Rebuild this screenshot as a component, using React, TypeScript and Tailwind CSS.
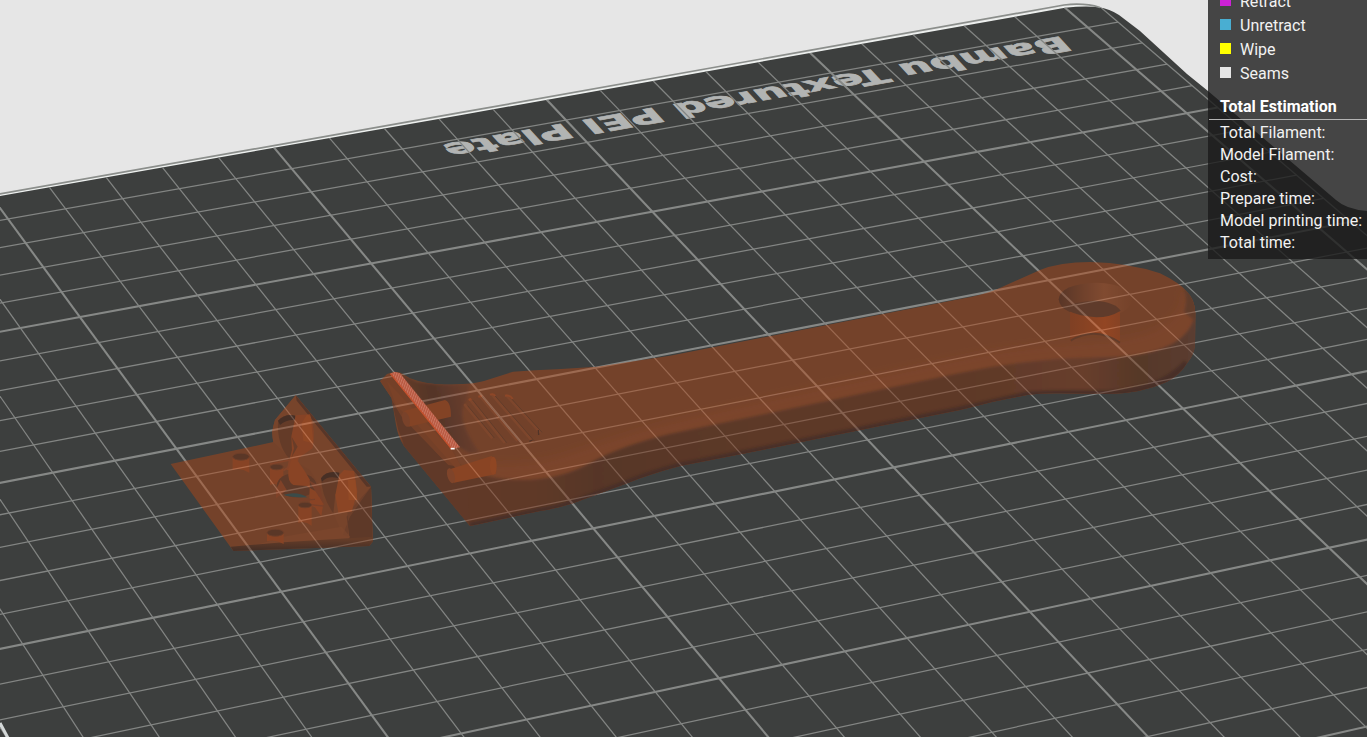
import React from "react";

type Point = [number, number];

// Projection of the build plate. One cell is 10 mm; the anchor quad spans 10 x 20 cells.
const anchors: Point[] = [
  [272.6, 145.9],
  [808.7, 51.6],
  [1329, 547.7],
  [719, 678.3],
];

function makeProjection([p0, p1, p2, p3]: Point[]) {
  const dx1 = p1[0] - p2[0];
  const dx2 = p3[0] - p2[0];
  const dx3 = p0[0] - p1[0] + p2[0] - p3[0];
  const dy1 = p1[1] - p2[1];
  const dy2 = p3[1] - p2[1];
  const dy3 = p0[1] - p1[1] + p2[1] - p3[1];
  const den = dx1 * dy2 - dx2 * dy1;
  const g = (dx3 * dy2 - dx2 * dy3) / den;
  const h = (dx1 * dy3 - dx3 * dy1) / den;
  return (u: number, v: number): Point => {
    const s = u / 10;
    const t = v / 20;
    const w = g * s + h * t + 1;
    return [
      ((p1[0] - p0[0] + g * p1[0]) * s + (p3[0] - p0[0] + h * p3[0]) * t + p0[0]) / w,
      ((p1[1] - p0[1] + g * p1[1]) * s + (p3[1] - p0[1] + h * p3[1]) * t + p0[1]) / w,
    ];
  };
}

const project = makeProjection(anchors);
const LEFT = -10;
const RIGHT = 15.6;
const BOTTOM = 25.6;

function GridLine({ from, to, bold }: { from: Point; to: Point; bold: boolean }) {
  const [x1, y1] = project(from[0], from[1]);
  const [x2, y2] = project(to[0], to[1]);
  return <line x1={x1} y1={y1} x2={x2} y2={y2} stroke={bold ? "#868886" : "#838583"} strokeWidth={bold ? 2.1 : 1.25} />;
}

const PLATE =
  "M-2 196.3 L460 115.2 L1065 7.8 Q1084 5.5 1098 7 Q1110 9 1119 15 L1140 31 L1187 74 L1208 91 L1336 200 Q1347 210 1369 211 V740 H-2 Z";

function Plate() {
  const columns = Array.from({ length: 26 }, (_, i) => LEFT + i);
  const rows = Array.from({ length: 25 }, (_, i) => i + 1);
  return (
    <g>
      <clipPath id="plate-clip">
        <path d={PLATE} />
      </clipPath>
      <path d="M-2 195.8 L460 114.7 L1065 7.2 Q1084 4.5 1096 6.5" fill="none" stroke="#eef1ef" strokeWidth="1.6" />
      <path d={PLATE} fill="#3d3f3e" />
      <text
        transform="matrix(-5.36 0.94 -2.2 -2.38 1062 36)"
        fontSize="7.95"
        fontWeight="700"
        fill="#b2b4b3"
        stroke="#b2b4b3"
        strokeWidth="0.25"
        className="font-['DejaVu_Sans',sans-serif]"
      >
        Bambu Textured PEI Plate
      </text>
      <g clipPath="url(#plate-clip)">
        {rows.map((v) => (
          <GridLine key={v} from={[LEFT, v]} to={[RIGHT, v]} bold={v % 5 === 0} />
        ))}
        {columns.map((u) => (
          <GridLine key={u} from={[u, 0]} to={[u, BOTTOM]} bold={u % 5 === 0} />
        ))}
        <GridLine from={[RIGHT, 0.2]} to={[RIGHT, BOTTOM]} bold={false} />
      </g>
      <path d="M0 723 L8 738" stroke="#d4d8d8" strokeWidth="3" />
      <path d="M-2 194.2 L460 112.7 L1064 5 Q1084 2.6 1100 7.500" fill="none" stroke="#8b8e8b" strokeWidth="1.7" />
    </g>
  );
}

function SmallHole({ x, y, rx, depth }: { x: number; y: number; rx: number; depth: number }) {
  return (
    <g>
      <path d={`M${x - rx} ${y} V${y + depth - 8} Q${x} ${y + depth - 16} ${x + rx} ${y + depth} V${y} Z`} fill="#e24a08" />
      <ellipse cx={x} cy={y} rx={rx} ry={rx * 0.42} fill="#7d2e0d" stroke="#a83d10" strokeWidth="3" />
    </g>
  );
}

function Bracket() {
  return (
    <g transform="translate(150 370) scale(0.33333)" opacity="0.45">
      <path d="M62 282 L370 216 L366 185 L375 150 L437 76 L663 350 L668 515 L658 528 L250 543 Z" fill="#b84713" />
      <path d="M437 76 L375 150 Q362 185 370 216 L425 268 L480 300 L530 380 L578 495 L668 500 L663 350 Z" fill="#be4b16" />
      <path d="M663 350 L668 515 L600 515 L590 440 Z" fill="#87320f" />
      <path d="M663 350 L600 440 L578 495 L595 500 L592 430 Z" fill="#a84113" />
      <path d="M437 76 L663 350 L650 350 L440 92 Z" fill="#7a2c0e" />
      <path d="M400 500 L575 470 L600 500 L590 512 L330 522 Z" fill="#c9511a" opacity="0.7" />
      <path d="M242 530 L400 517 L668 500 L668 515 L658 528 L250 543 Z" fill="url(#foot)" />

      <path d="M384 152 Q400 132 436 137 L450 160 L440 235 L418 266 Q380 225 384 152 Z" fill="#94380f" />
      <path d="M384 152 Q405 130 436 137 L434 150 Q410 148 390 165 Z" fill="#551d08" />
      <path d="M437 136 L480 133 Q498 180 488 235 L446 264 L440 300 L410 300 L426 240 L424 200 Z" fill="#df4a0a" />
      <path d="M470 136 Q478 133 482 142 L490 220 L460 212 L455 160 Z" fill="#f45206" />
      <path d="M425 200 L443 230 L425 262 L432 235 Z" fill="#a03a0e" />

      <path d="M513 325 Q530 300 568 308 L570 350 L556 375 L550 430 Q515 380 513 325 Z" fill="#94380f" />
      <path d="M513 325 Q530 300 568 308 L565 325 Q535 315 516 335 Z" fill="#551d08" />
      <path d="M568 315 L582 300 L612 303 L622 365 L605 425 L565 428 L556 375 Z" fill="#ea4e08" />
      <path d="M594 330 L616 330 L622 390 L596 390 Z" fill="#fb5808" />

      <SmallHole x={273} y={260} rx={25} depth={48} />
      <SmallHole x={380} y={291} rx={20} depth={62} />
      <path d="M360 282 L420 270 L415 292 L400 302" fill="none" stroke="#d84a10" strokeWidth="5" />

      <ellipse cx="440" cy="345" rx="59" ry="37" fill="#8c3510" />
      <path d="M400 375 Q440 362 472 382 Q430 384 400 375 Z" fill="#3a5a58" />
      <path d="M415 300 Q412 335 430 345 L470 348 L510 372 L522 405 L478 385 L480 330 L462 300 L440 268 L424 268 Z" fill="#e54b08" />
      <path d="M476 330 L510 350 L522 405 L500 370 Z" fill="#bd4011" />
      <path d="M378 360 L378 385 L410 360 L392 330 Z" fill="#d0460f" />
      <path d="M480 388 L508 382 L519 406 L514 438 L495 412 L478 405 Z" fill="#e64a08" />
      <path d="M445 400 L520 408 M450 392 L495 388" stroke="#c04212" strokeWidth="4" />
      <SmallHole x={465} y={405} rx={20} depth={62} />
      <SmallHole x={376} y={488} rx={25} depth={34} />
    </g>
  );
}

const HANDLE =
  "M380 381 L387 374 Q395 371 400 372.500 L410 378.300 Q424 384 445 384.600 Q472 384.500 484 381 L513 371.700 Q535 370 557 369.300 L597 366.700 L670 355.700 L960 299 Q980 296 997 289.300 L1040 270 Q1060 262 1090 262 Q1130 263 1160 273.300 Q1180 283 1187 291.700 Q1195 300 1195.300 313 L1195 345 Q1194 355 1187 363.300 Q1180 375 1167 381.700 Q1140 394 1107 394 L1060 393.300 Q1040 393 1027 395 L993 401.700 L960 410 L880 426 L762 450 L680 466 Q650 474 627 483.300 L573 503.300 Q555 509 540 511 L470 526 L404 446 Q398 437 396 425 L391.500 398 Z";

const ribs = ["M285 165 L365 262", "M300 148 L402 276", "M330 138 L440 270", "M366 134 L486 272", "M410 137 L508 245"];

function Handle() {
  return (
    <g opacity="0.45">
      <clipPath id="handle-clip">
        <path d={HANDLE} />
      </clipPath>
      <path d={HANDLE} fill="#b84713" />
      <g clipPath="url(#handle-clip)">
        <path
          d="M455 462 Q520 468 560 456 Q590 446 640 430 Q690 414 960 358 Q1010 346 1100 341 Q1150 338 1172 318 Q1186 304 1182 290 L1200 300 V330 Q1180 362 1103 362 Q1050 362 960 380 L670 438 Q600 470 560 484 Q520 488 455 474 Z"
          fill="#c84e17"
          filter="url(#soft)"
        />
        <path
          d="M396 440 L455 462 Q480 480 525 480 Q562 479 590 463 Q620 446 670 434 L960 373 Q1030 358 1103 357.500 Q1150 357 1174 343 Q1192 332 1196 312 L1200 400 L960 440 L470 540 L380 450 Z"
          fill="url(#side)"
          filter="url(#tiny)"
        />
        <path
          d="M470 526 L540 511 Q555 509 573 503.300 L627 483.300 Q650 474 680 466 L762 450 L960 410 L1027 395 Q1060 393 1107 394 Q1160 392 1187 363"
          fill="none"
          stroke="#571f0a"
          strokeWidth="7"
          filter="url(#tiny)"
        />
        <path d="M1184 288 Q1188 300 1184 312 L1200 325 V290 Z" fill="#8d3b18" filter="url(#tiny)" />

        <g transform="translate(370 350) scale(0.33333)">
          <path d="M60 130 L85 240 L105 290 L298 527 L292 400 L240 355 L150 250 Z" fill="#8b330f" />
          <path
            d="M88 70 L140 95 Q240 110 300 100 L290 150 Q250 200 330 310 L300 310 L265 290 Z"
            fill="url(#ramp)"
            filter="url(#soft)"
          />
          <path d="M30 93 L55 85 L62 70 L250 298 L270 350 L235 345 L95 200 L62 145 Z" fill="#b8430f" />
          <path d="M52 95 L245 300 L275 352 L260 358 L130 210 L80 170 Z" fill="#c5470e" />
          <path d="M285 165 Q350 120 410 137 L508 245 Q470 290 400 276 L365 262 Z" fill="#b04516" opacity="0.5" filter="url(#soft)" />
          <path d="M98 192 Q100 182 112 180 L225 150 Q243 155 243 200 L116 230 Z" fill="#d84807" />
          <ellipse cx="108" cy="208" rx="11" ry="23" fill="#c34713" transform="rotate(-15 108 208)" />
          <path d="M232 360 L365 318 Q382 330 378 372 L252 398 Z" fill="#e64b05" />
          <ellipse cx="243" cy="377" rx="11" ry="23" fill="#d04c12" transform="rotate(-15 243 377)" />
          <ellipse cx="370" cy="347" rx="10" ry="27" fill="#f25004" />
          {ribs.map((d) => (
            <g key={d}>
              <path d={d} stroke="#cc4f18" strokeWidth="8" strokeLinecap="round" />
              <path d={d} stroke="#8f3a12" strokeWidth="3" transform="translate(8 2)" />
            </g>
          ))}
          <path d="M505 240 L506 255 M478 274 L488 270" stroke="#6a280e" strokeWidth="4" />
          <path d="M405 137 Q420 134 428 147 M360 134 Q370 130 376 138 M296 150 L304 147 M325 140 L335 138" stroke="#f0520e" strokeWidth="6" fill="none" />
        </g>

        <g transform="translate(960 230) scale(0.33333)">
          <path d="M296 208 Q300 162 410 158 Q515 162 516 215 Q500 258 410 262 Q300 255 296 208 Z" fill="url(#bowl)" />
          <path d="M330 245 H480 V338 Q405 285 330 335 Z" fill="url(#bore)" />
          <path d="M310 232 Q345 214 405 212 Q465 216 482 242 Q450 262 410 262 Q340 258 310 232 Z" fill="#8a3815" />
          <path d="M332 332 Q405 288 480 338" fill="none" stroke="#933a12" strokeWidth="6" />
        </g>
      </g>
    </g>
  );
}

function SlicedLayer() {
  return (
    <g transform="translate(370 350) scale(0.33333)">
      <path d="M61 71 L74 65 L90 70 L270 292 L245 297 Z" fill="url(#hatch)" />
      <path d="M61 71 L245 297" stroke="#c4502c" strokeWidth="4" />
      <path d="M242 296 H254" stroke="#ffffff" strokeWidth="5" />
    </g>
  );
}

function Scene() {
  return (
    <svg
      viewBox="0 0 1367 737"
      preserveAspectRatio="xMaxYMin slice"
      className="absolute inset-0 h-full w-full"
      role="img"
      aria-label="Build plate preview"
    >
      <defs>
        <filter id="soft" x="-10%" y="-20%" width="120%" height="140%">
          <feGaussianBlur stdDeviation="5" />
        </filter>
        <filter id="tiny" x="-10%" y="-20%" width="120%" height="140%">
          <feGaussianBlur stdDeviation="1.5" />
        </filter>
        <linearGradient id="side" gradientUnits="userSpaceOnUse" x1="396" y1="0" x2="1196" y2="0">
          <stop offset="0" stopColor="#8b330f" />
          <stop offset="0.17" stopColor="#8a330f" />
          <stop offset="0.25" stopColor="#762c0f" />
          <stop offset="0.45" stopColor="#84310f" />
          <stop offset="0.72" stopColor="#87330f" />
          <stop offset="0.86" stopColor="#9c3d15" />
          <stop offset="0.93" stopColor="#74300f" />
          <stop offset="1" stopColor="#803b22" />
        </linearGradient>
        <linearGradient id="foot" x1="0" y1="0" x2="0" y2="1">
          <stop offset="0.2" stopColor="#94390f" />
          <stop offset="0.9" stopColor="#541e0a" />
        </linearGradient>
        <linearGradient id="ramp" x1="0" y1="0.5" x2="1" y2="0.3">
          <stop offset="0" stopColor="#9a3a10" />
          <stop offset="0.45" stopColor="#702a11" />
          <stop offset="1" stopColor="#b24513" />
        </linearGradient>
        <linearGradient id="bowl" x1="0" y1="0" x2="1" y2="0">
          <stop offset="0" stopColor="#7a2c0d" />
          <stop offset="0.35" stopColor="#b04617" />
          <stop offset="0.62" stopColor="#d35a22" />
          <stop offset="1" stopColor="#b84713" />
        </linearGradient>
        <linearGradient id="bore" x1="0" y1="0" x2="1" y2="0">
          <stop offset="0" stopColor="#cf4205" />
          <stop offset="0.7" stopColor="#fb4f03" />
          <stop offset="1" stopColor="#e04806" />
        </linearGradient>
        <pattern id="hatch" width="7" height="7" patternUnits="userSpaceOnUse" patternTransform="rotate(20)">
          <rect width="7" height="7" fill="#b85840" />
          <rect width="3" height="7" fill="#cc7862" />
        </pattern>
      </defs>
      <Plate />
      <Bracket />
      <Handle />
      <SlicedLayer />
    </svg>
  );
}

const moveTypes = [
  { label: "Retract", swatch: "bg-[#cd22d6]" },
  { label: "Unretract", swatch: "bg-[#49aed2]" },
  { label: "Wipe", swatch: "bg-[#ffff00]" },
  { label: "Seams", swatch: "bg-[#e6e6e6]" },
];

const estimates = ["Total Filament:", "Model Filament:", "Cost:", "Prepare time:", "Model printing time:", "Total time:"];

function Legend() {
  return (
    <aside className="absolute top-0 right-0 w-[159px] overflow-hidden bg-[#1a1a1a]/79 pb-[5px] text-base whitespace-nowrap text-[#f2f2f2]">
      <ul className="-mt-[10px] pl-3">
        {moveTypes.map((type) => (
          <li key={type.label} className="flex h-6 items-center gap-2">
            <span className={`mb-0.5 size-3 border-r border-b border-transparent bg-clip-padding ${type.swatch}`} />
            {type.label}
          </li>
        ))}
      </ul>
      <h2 className="mt-2 ml-px border-b border-[#b4b4b4] pl-[11px] text-base leading-[25px] font-bold text-white">
        Total Estimation
      </h2>
      <ul className="mt-0.5 pl-3 leading-[22px]">
        {estimates.map((label) => (
          <li key={label}>{label}</li>
        ))}
      </ul>
    </aside>
  );
}

export default function App() {
  return (
    <main className="relative min-h-screen overflow-hidden bg-[#e6e6e6] font-['Roboto',sans-serif]">
      <Scene />
      <Legend />
    </main>
  );
}
